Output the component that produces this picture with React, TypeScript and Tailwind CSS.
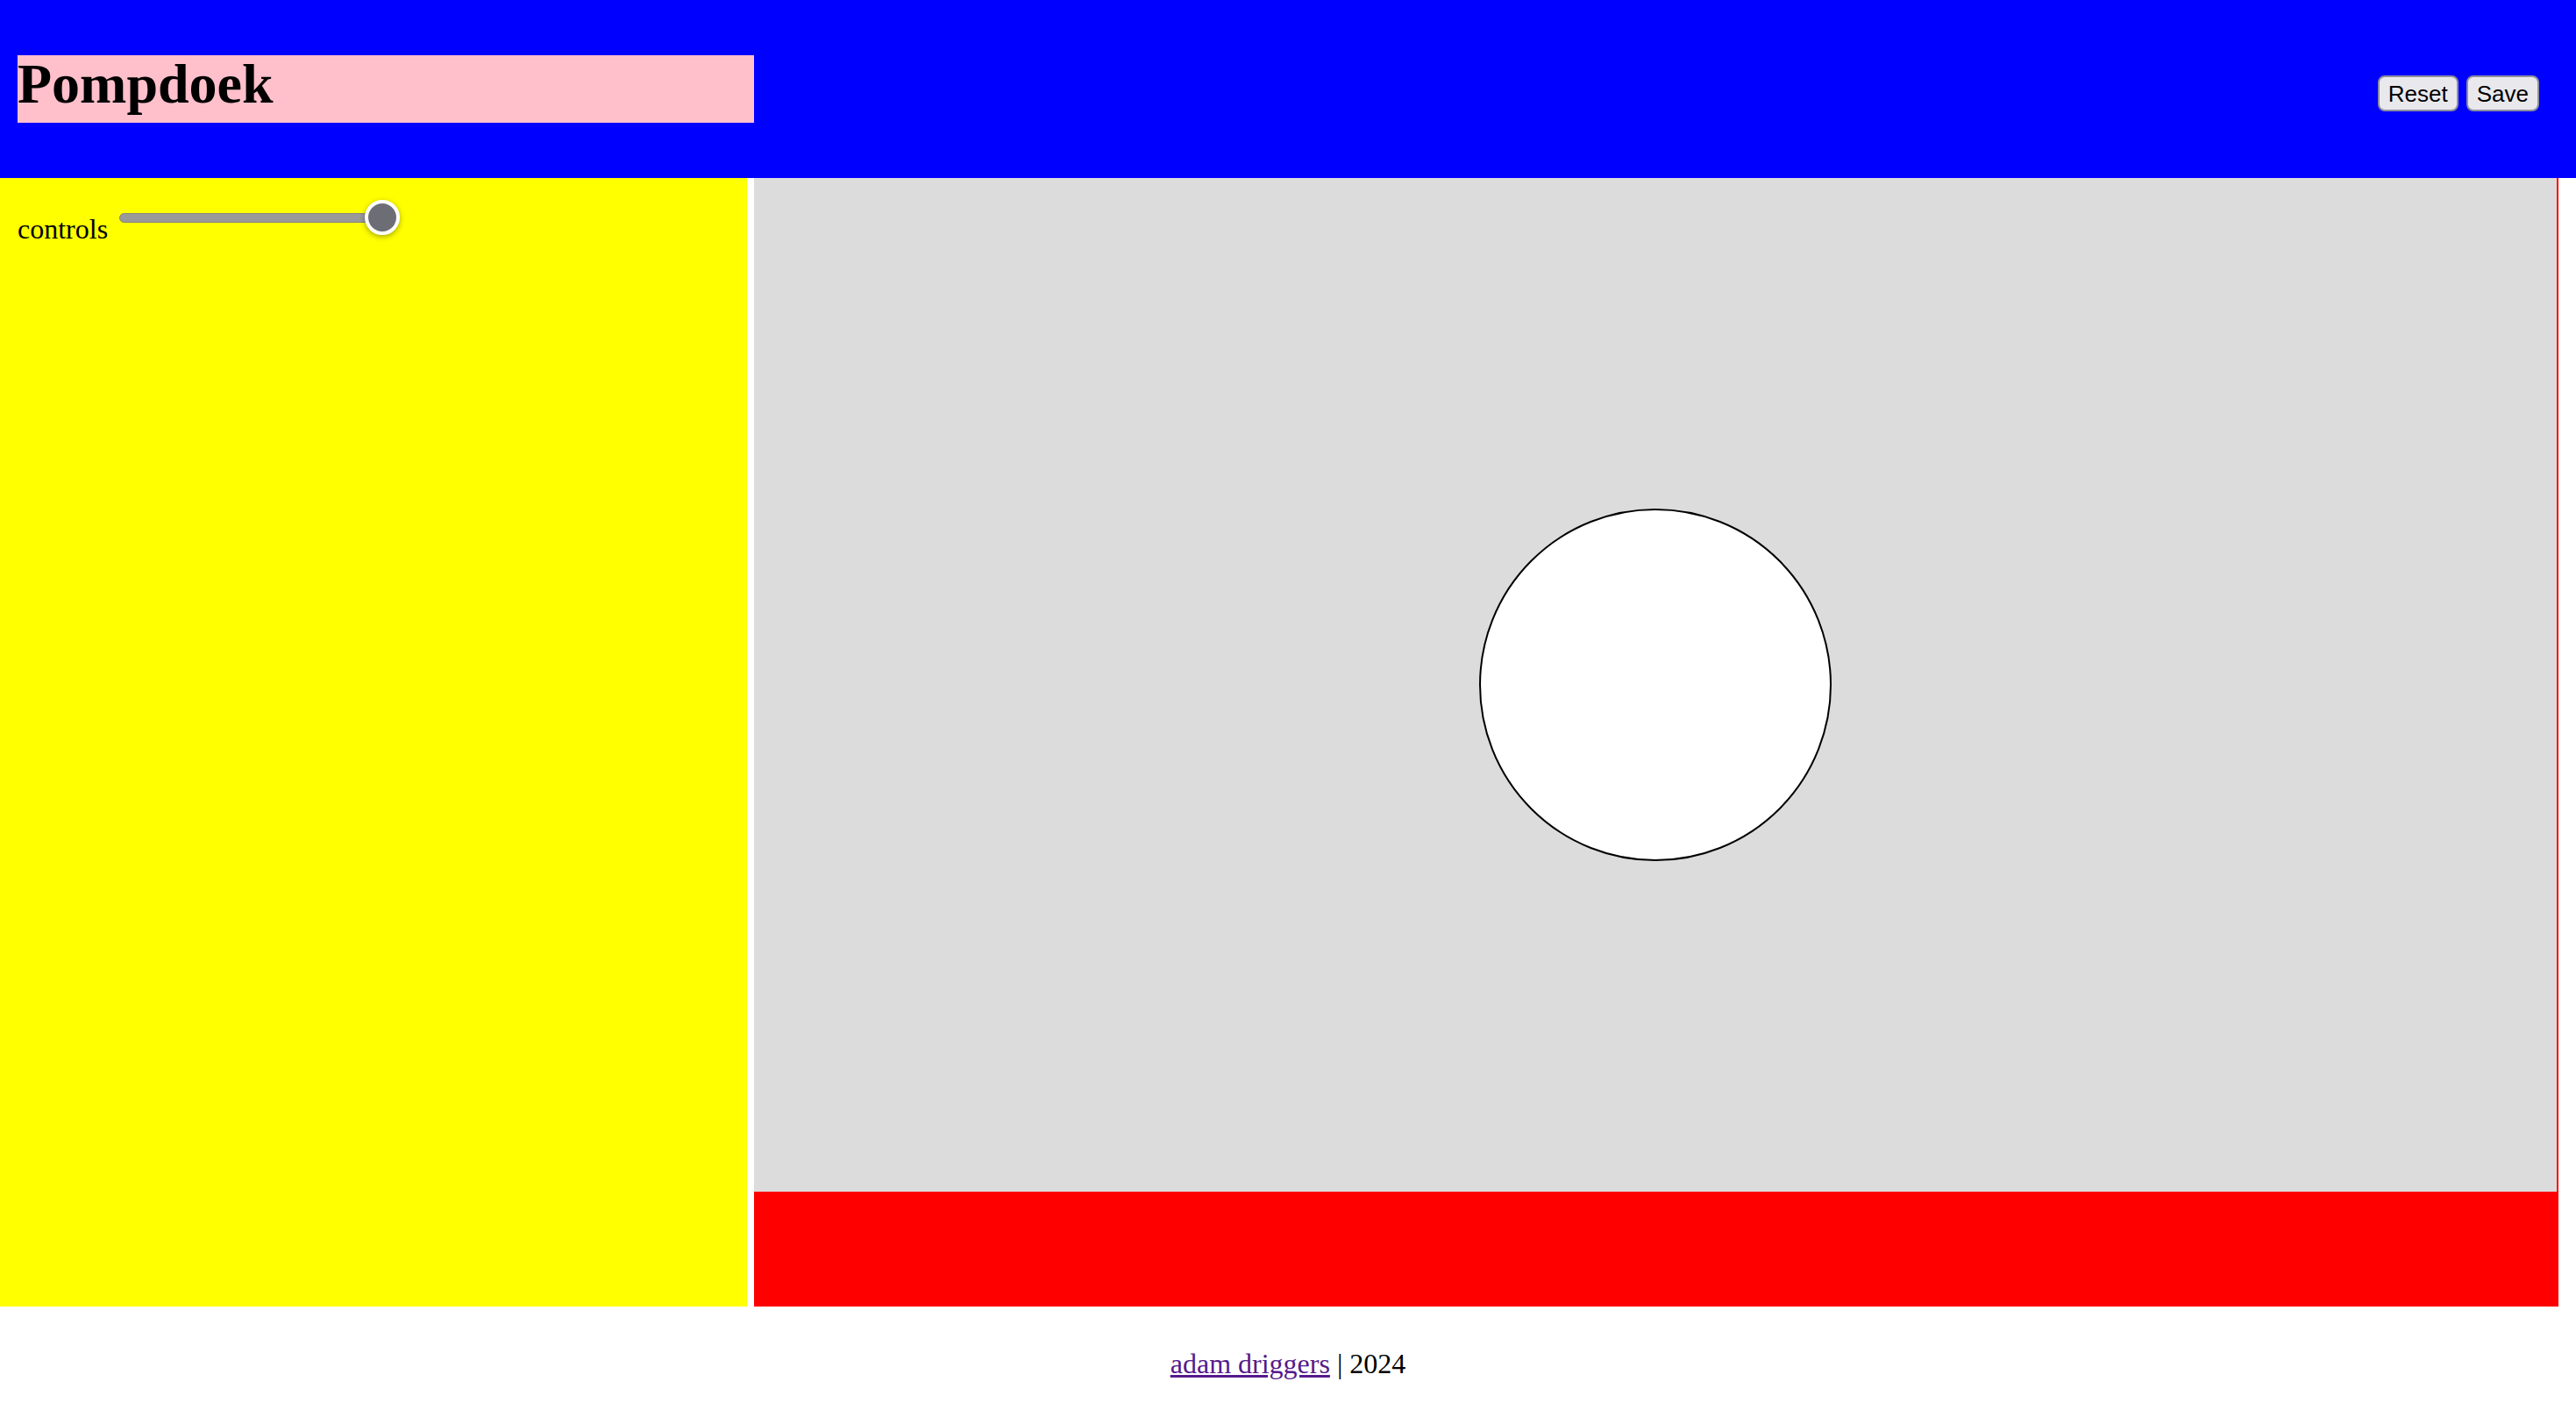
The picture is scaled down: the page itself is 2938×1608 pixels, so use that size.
import { useState } from "react"

export default function App() {
  const [size] = useState(100)

  return (
    <div className="w-[2938px] h-[1608px] bg-white flex flex-col font-['Liberation_Serif',serif] text-black">
      <header className="h-[203px] shrink-0 bg-[#0000ff] flex justify-between items-start">
        <div className="ml-[20px] mt-[63px] w-[840px] h-[77px] bg-[#ffc0cb]">
          <h1 className="text-[64px] font-bold leading-[66px]">Pompdoek</h1>
        </div>
        <div className="mt-[86px] mr-[42px] flex gap-[9px] font-['Liberation_Sans',Arial,sans-serif] text-[26px]">
          <button className="h-[41px] px-[10px] bg-[#e9e9ed] border-2 border-[#8f8f9d] rounded-[8px] leading-none">
            Reset
          </button>
          <button className="h-[41px] px-[10px] bg-[#e9e9ed] border-2 border-[#8f8f9d] rounded-[8px] leading-none">
            Save
          </button>
        </div>
      </header>

      <main className="h-[1287px] shrink-0 flex">
        <div className="w-[852px] bg-[#ffff00] flex items-start">
          <span className="ml-[20px] mt-[40px] text-[32px] leading-[37px]">controls</span>
          <div className="relative ml-[13px] mt-[25px] w-[320px] h-[40px]">
            <div className="absolute left-0 top-[15px] w-[300px] h-[11px] rounded-full bg-[#999999] border border-[#858585]" />
            <div
              className="absolute top-0 w-[40px] h-[40px] rounded-full bg-[#6d6d76] border-[4px] border-white shadow-[0_2px_6px_rgba(0,0,0,0.35)]"
              style={{ left: `${(size / 100) * 280}px` }}
            />
          </div>
        </div>

        <div className="ml-[8px] w-[2058px] flex flex-col">
          <div className="flex-1 bg-[#dcdcdc] border-r-2 border-[#ff0000] flex items-center justify-center">
            <svg width="404" height="404" viewBox="0 0 404 404">
              <circle cx="202" cy="202" r="200" fill="#ffffff" stroke="#000000" strokeWidth="2" />
            </svg>
          </div>
          <div className="h-[131px] bg-[#ff0000]" />
        </div>
      </main>

      <footer className="h-[118px] pt-[47px] text-center text-[32px] leading-[37px]">
        <a href="#" className="text-[#551a8b] underline">adam driggers</a> | 2024
      </footer>
    </div>
  )
}
